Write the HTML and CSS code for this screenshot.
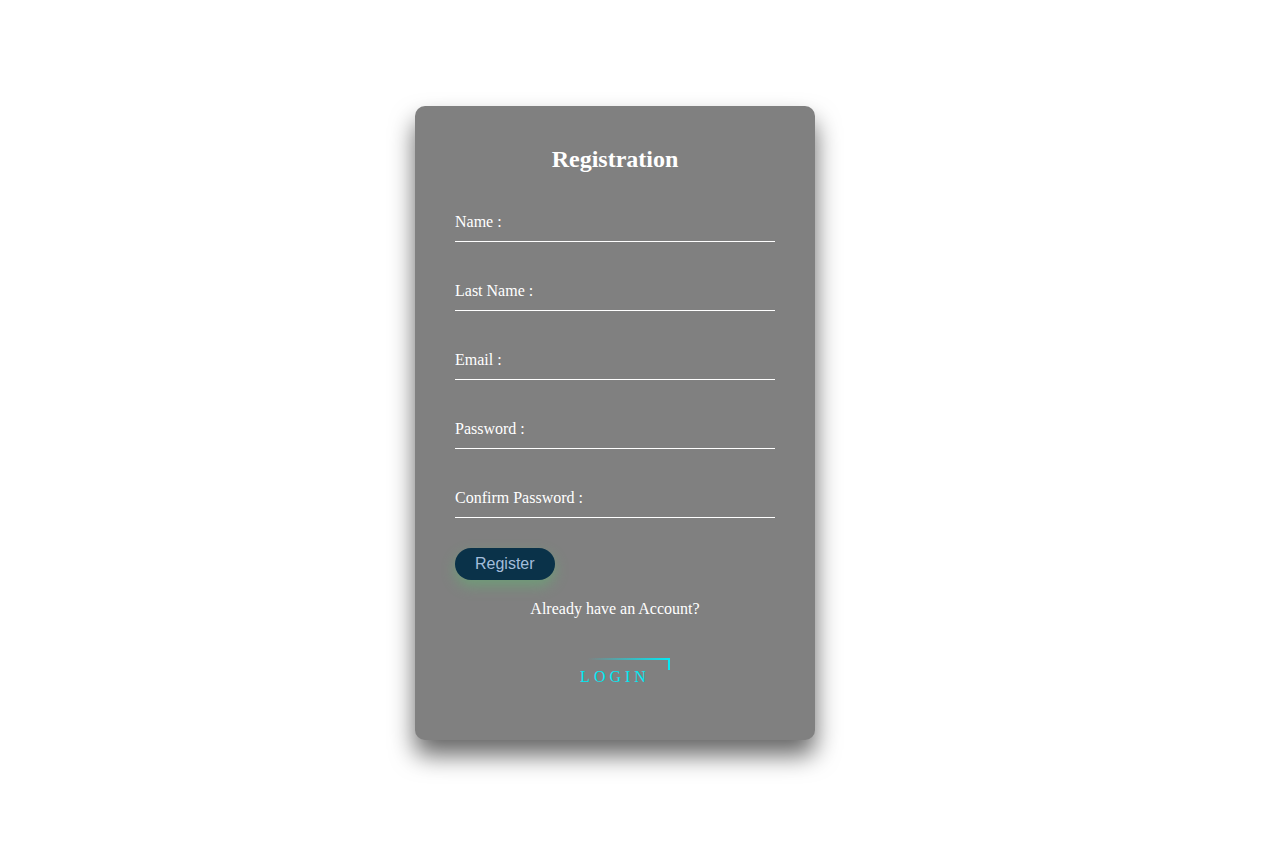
FILE: index.html
```html
<!DOCTYPE html>
<html>
<head>
<meta charset="utf-8">
<title>Registration</title>
<link rel="stylesheet" href="styles.css">
</head>
<body>
<div class="page">
  <div class="box">
    <h2 class="title">Registration</h2>
    <form class="form">
      <div class="field"><input class="input" type="text" required><label class="label">Name :</label></div>
      <div class="field"><input class="input" type="text" required><label class="label">Last Name :</label></div>
      <div class="field"><input class="input" type="text" required><label class="label">Email :</label></div>
      <div class="field"><input class="input" type="password" required><label class="label">Password :</label></div>
      <div class="field"><input class="input" type="password" required><label class="label">Confirm Password :</label></div>
      <button class="btn" type="button">Register</button>
      <p class="already">Already have an Account?</p>
      <div class="center">
        <a class="login" href="#"><span class="edge-top"></span><span class="edge-right"></span>Login</a>
      </div>
    </form>
  </div>
</div>
</body>
</html>
```

FILE: styles.css
```css
html, body {
  margin: 0;
  padding: 0;
  background: #fff;
  font-family: "Liberation Serif", "Times New Roman", serif;
}
.page {
  height: 844px;
  display: flex;
  justify-content: center;
  align-items: flex-start;
  padding: 106px 38px 0 0;
  box-sizing: border-box;
}
.box {
  width: 400px;
  box-sizing: border-box;
  padding: 40px;
  background: #808080;
  border-radius: 10px;
  box-shadow: 0 15px 25px rgba(0, 0, 0, 0.6);
}
.title {
  margin: 0 0 30px;
  padding: 0;
  font-size: 24px;
  font-weight: bold;
  color: #fff;
  text-align: center;
  line-height: 27px;
}
.form { margin: 0; }
.field {
  position: relative;
}
.input {
  display: block;
  width: 100%;
  box-sizing: border-box;
  padding: 10px 0;
  font-size: 16px;
  line-height: 18px;
  font-family: inherit;
  color: #fff;
  margin: 0 0 30px;
  border: none;
  border-bottom: 1px solid #fff;
  outline: none;
  background: transparent;
}
.label {
  position: absolute;
  top: 0;
  left: 0;
  padding: 10px 0;
  font-size: 16px;
  line-height: 18px;
  color: #fff;
  pointer-events: none;
}
.btn {
  display: block;
  height: 32px;
  padding: 0 20px;
  border: none;
  border-radius: 16px;
  background: #0a3249;
  color: #a3bddb;
  font-family: "Liberation Sans", Arial, sans-serif;
  font-size: 16px;
  box-shadow: 0 6px 14px rgba(90, 190, 110, 0.45);
  cursor: pointer;
}
.already {
  margin: 20px 0 0;
  text-align: center;
  color: #fff;
  font-size: 16px;
  line-height: 18px;
}
.center {
  text-align: center;
}
.login {
  position: relative;
  display: inline-block;
  margin-top: 40px;
  padding: 10px 20px;
  color: #03e9f4;
  font-size: 16px;
  line-height: 18px;
  text-decoration: none;
  text-transform: uppercase;
  letter-spacing: 4px;
  overflow: hidden;
}
.edge-top {
  position: absolute;
  top: 0;
  left: 0;
  width: 100%;
  height: 2px;
  background: linear-gradient(90deg, transparent 25%, #03e9f4);
}
.edge-right {
  position: absolute;
  top: 0;
  right: 0;
  width: 2px;
  height: 12px;
  background: #03e9f4;
}
```
